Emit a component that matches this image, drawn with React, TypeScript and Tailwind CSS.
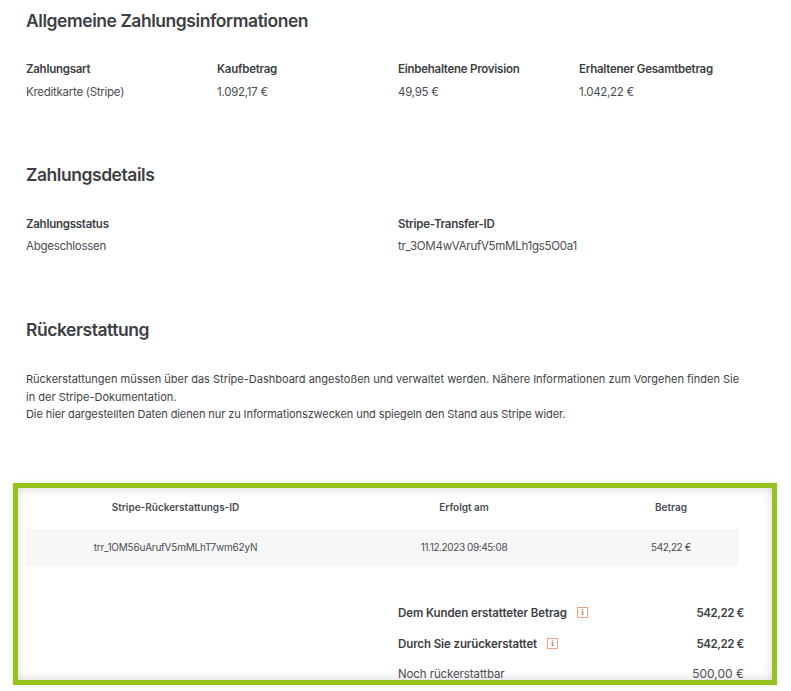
import React from 'react';

const font = "font-['Inter',sans-serif]";

const InfoBadge = () => (
  <span className="ml-[10px] flex h-[11px] w-[11px] items-center justify-center border border-[#eda283] font-['Liberation_Serif',serif] text-[9px] leading-none font-bold tracking-normal text-[#d9784a]">
    i
  </span>
);

const Field = ({ label, value, tight }: { label: string; value: string; tight?: boolean }) => (
  <div>
    <p className="text-[11.5px] leading-[16px] font-semibold tracking-[-0.25px] text-[#3d3f45]">{label}</p>
    <p className={`${tight ? 'mt-[6px]' : 'mt-[7px]'} text-[11.5px] leading-[16px] tracking-[-0.27px] text-[#4a4c52]`}>{value}</p>
  </div>
);

const Heading = ({ children }: { children: React.ReactNode }) => (
  <h2 className="text-[17.5px] leading-[24px] font-semibold tracking-[-0.45px] text-[#3d3f45]">{children}</h2>
);

export default function App() {
  return (
    <div className={`${font} h-[691px] w-[791px] overflow-hidden bg-white`}>
      <section className="px-[26px] pt-[9px]">
        <Heading>Allgemeine Zahlungsinformationen</Heading>
        <div className="mt-[28px] grid grid-cols-[191px_181px_181px_181px]">
          <Field label="Zahlungsart" value="Kreditkarte (Stripe)" />
          <Field label="Kaufbetrag" value="1.092,17 €" />
          <Field label="Einbehaltene Provision" value="49,95 €" />
          <Field label="Erhaltener Gesamtbetrag" value="1.042,22 €" />
        </div>
      </section>

      <section className="px-[26px] pt-[63px]">
        <Heading>Zahlungsdetails</Heading>
        <div className="mt-[29px] grid grid-cols-[372px_362px]">
          <Field tight label="Zahlungsstatus" value="Abgeschlossen" />
          <Field tight label="Stripe-Transfer-ID" value="tr_3OM4wVArufV5mMLh1gs5O0a1" />
        </div>
      </section>

      <section className="px-[26px] pt-[64px]">
        <Heading>Rückerstattung</Heading>
        <p className="mt-[29px] w-[722px] text-[11px] leading-[17.5px] text-[#3d3f45]">
          Rückerstattungen müssen über das Stripe-Dashboard angestoßen und verwaltet werden. Nähere Informationen zum Vorgehen finden Sie in der Stripe-Dokumentation.
          <br />
          <span className="tracking-[-0.09px]">Die hier dargestellten Daten dienen nur zu Informationszwecken und spiegeln den Stand aus Stripe wider.</span>
        </p>
      </section>

      <div className="mt-[59px] ml-[13px] h-[202px] w-[764px] overflow-hidden border-[5px] border-[#95c11f] pt-[12px] pl-[8px] shadow-[0_0_6px_rgba(0,0,0,0.1),inset_0_0_10px_rgba(0,0,0,0.18)]">
        <div className="grid w-[713px] grid-cols-[299px_278px_136px] text-center text-[10px] leading-[14px] text-[#4a4c52]">
          <span className="font-semibold">Stripe-Rückerstattungs-ID</span>
          <span className="font-semibold">Erfolgt am</span>
          <span className="font-semibold">Betrag</span>
        </div>
        <div className="mt-[15px] grid h-[37px] w-[713px] grid-cols-[299px_278px_136px] items-center bg-[#f7f7f7] text-center text-[10px] text-[#4a4c52]">
          <span className="tracking-[-0.2px]">trr_1OM56uArufV5mMLhT7wm62yN</span>
          <span className="tracking-[-0.4px]">11.12.2023 09:45:08</span>
          <span className="tracking-[-0.4px]">542,22 €</span>
        </div>
        <div className="mt-[39px] ml-[372px] w-[346px] text-[11.5px] leading-[16px] tracking-[-0.1px] text-[#3d3f45]">
          <div className="flex items-center justify-between font-semibold">
            <span className="flex items-center">Dem Kunden erstatteter Betrag<InfoBadge /></span>
            <span className="tracking-[-0.4px]">542,22 €</span>
          </div>
          <div className="mt-[15px] flex items-center justify-between font-semibold">
            <span className="flex items-center">Durch Sie zurückerstattet<InfoBadge /></span>
            <span className="tracking-[-0.4px]">542,22 €</span>
          </div>
          <div className="mt-[14px] flex items-center justify-between text-[#4a4c52]">
            <span>Noch rückerstattbar</span>
            <span className="text-[12px] tracking-normal">500,00 €</span>
          </div>
        </div>
      </div>
    </div>
  );
}
